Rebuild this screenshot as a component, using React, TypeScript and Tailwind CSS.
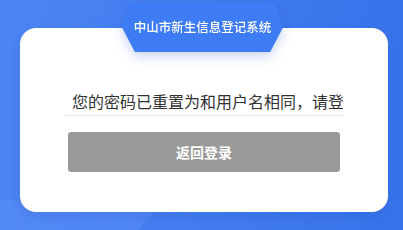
export default function App() {
  return (
    <div
      className="relative w-[403px] h-[230px] overflow-hidden bg-gradient-to-r from-[#4c85f4] to-[#3873ea]"
      style={{ fontFamily: '"Noto Sans CJK SC", "Noto Sans", sans-serif' }}
    >
      <svg className="absolute inset-0" width="403" height="230" viewBox="0 0 403 230">
        <polygon points="0,120 0,230 138,230 165,200 0,200" fill="#5a90f8" opacity="0.45" />
      </svg>
      <div className="relative pt-[28px] px-[20px] pb-[18px]">
        <div className="h-[184px] w-[368px] rounded-[16px] bg-white shadow-[0_4px_12px_rgba(20,60,160,0.15)] flex flex-col items-center pt-[61px]">
          <div className="w-[278px] border-b border-[#e6e6e6] pb-[2px]">
            <input
              readOnly
              value="您的密码已重置为和用户名相同，请登录后修改密码"
              className="w-full pl-[7px] pr-0 text-[16px] leading-[24px] text-[#333] bg-transparent outline-none"
              style={{ fontFamily: '"Noto Sans CJK SC", sans-serif' }}
            />
          </div>
          <button className="mt-[16px] w-[272px] h-[40px] rounded-[3px] bg-[#9a9a9a] text-white text-[14px] font-bold">
            返回登录
          </button>
        </div>
      </div>
      <div className="absolute left-[122px] top-[3px] w-[161px] h-[49px] drop-shadow-[0_4px_6px_rgba(30,80,200,0.25)]">
        <div
          className="w-full h-full bg-[#3d7cf4] flex items-center justify-center text-white text-[12.5px] font-medium"
          style={{ clipPath: 'polygon(5% 0, 95% 0, 100% 50%, 92% 100%, 8% 100%, 0 50%)' }}
        >
          中山市新生信息登记系统
        </div>
      </div>
    </div>
  );
}
